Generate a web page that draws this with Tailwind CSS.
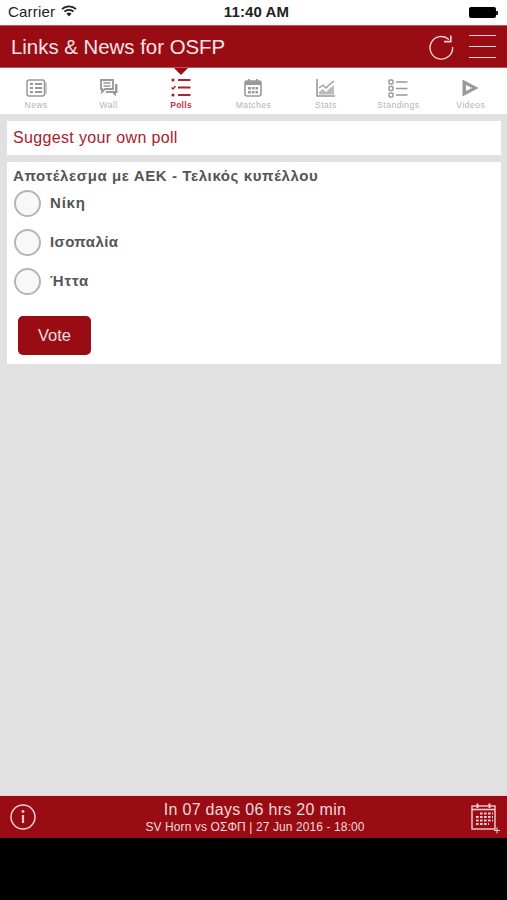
<!DOCTYPE html>
<html lang="en">
<head>
    <meta charset="UTF-8">
    <meta name="viewport" content="width=device-width, initial-scale=1.0">
    <title>Links & News for OSFP</title>
    <script src="https://cdn.jsdelivr.net/npm/@tailwindcss/browser@4"></script>
</head>
<body class="bg-black font-['Liberation_Sans',sans-serif]">
<div class="w-[507px] h-[900px] flex flex-col overflow-hidden">
    <!-- status bar -->
    <div class="h-[25px] shrink-0 bg-white grid grid-cols-3 items-center px-[8px] text-[#222]">
        <div class="flex items-center gap-[6px] text-[15px] tracking-[0.2px]">
            <span>Carrier</span>
            <svg width="16" height="12" viewBox="0 0 16 12" class="-mt-[3px]">
                <path d="M1 4.2 A10 10 0 0 1 15 4.2" fill="none" stroke="#222" stroke-width="1.7"/>
                <path d="M3.4 6.7 A6.6 6.6 0 0 1 12.6 6.7" fill="none" stroke="#222" stroke-width="1.7"/>
                <path d="M5.5 8.8 A3.6 3.6 0 0 1 10.5 8.8 L8 11.4 Z" fill="#222"/>
            </svg>
        </div>
        <div class="text-center text-[15px] font-bold whitespace-nowrap pl-[6px] tracking-[0.1px]">11:40 AM</div>
        <div class="flex justify-end items-center pr-[1px]">
            <div class="w-[27px] h-[11px] bg-black rounded-[2px]"></div>
            <div class="w-[2px] h-[4px] bg-[#222]"></div>
        </div>
    </div>

    <!-- title bar -->
    <div class="h-[43px] shrink-0 bg-[#990c14] border-y border-[#c4545a] flex items-center justify-between pl-[11px] pr-[11px] text-[#f6e4e5]">
        <div class="text-[20.4px] pt-[1px]">Links &amp; News for OSFP</div>
        <div class="flex items-center gap-[15px]">
            <svg width="26" height="26" viewBox="0 0 26 26" fill="none" stroke="#f5d5d6" stroke-width="1.4">
                <path d="M21 5.5 A11.3 11.3 0 1 0 24.6 13"/>
                <path d="M16 7.6 H22.8 V1.6" stroke-width="1.6"/>
            </svg>
            <div class="w-[27px] flex flex-col gap-[9.5px]">
                <div class="h-[1.5px] bg-[#f5d5d6]"></div>
                <div class="h-[1.5px] bg-[#f5d5d6]"></div>
                <div class="h-[1.5px] bg-[#f5d5d6]"></div>
            </div>
        </div>
    </div>

    <!-- tabs -->
    <div class="relative h-[46px] shrink-0 bg-white grid grid-cols-7 text-[8.5px] text-[#b3b3b3] tracking-[0.5px]">
        <div class="absolute left-[174px] top-0 w-0 h-0 border-x-[7px] border-x-transparent border-t-[7px] border-t-[#990c14]"></div>
        <div class="flex flex-col items-center pt-[11px]">
            <svg width="21" height="18" viewBox="0 0 21 18" fill="none" stroke="#999" stroke-width="1.5">
                <rect x="1" y="1" width="17.5" height="16" rx="2"/>
                <path d="M4 5 H7 M4 9 H7 M4 13 H7 M9 5 H16 M9 9 H16 M9 13 H16" stroke-width="2"/>
                <path d="M19 4 H20 V15" stroke-width="1"/>
            </svg>
            <span class="mt-[2px]">News</span>
        </div>
        <div class="flex flex-col items-center pt-[11px]">
            <svg width="18" height="18" viewBox="0 0 18 18" fill="none">
                <path d="M1 1 H13 V10 H5 L2 13 V10 H1 Z" stroke="#999" stroke-width="1.8"/>
                <path d="M3.5 4 H10.5 M3.5 7 H10.5" stroke="#999" stroke-width="1.3"/>
                <path d="M15 5 H17.5 V14 H16 V17.5 L12.5 14 H6 V12 H15 Z" fill="#999"/>
            </svg>
            <span class="mt-[2px]">Wall</span>
        </div>
        <div class="flex flex-col items-center pt-[10px] text-[#b53a42] font-bold tracking-[0.3px]">
            <svg width="20" height="19" viewBox="0 0 20 19" fill="none" stroke="#a8232b">
                <circle cx="2" cy="2" r="1.6" fill="#a8232b" stroke="none"/>
                <path d="M0.5 9.5 L2 11 L4.5 8" stroke-width="1.4"/>
                <circle cx="2" cy="17" r="1.6" fill="#a8232b" stroke="none"/>
                <path d="M7 2 H19.5 M7 9.5 H19.5 M7 17 H19.5" stroke-width="1.8"/>
            </svg>
            <span class="mt-[2px]">Polls</span>
        </div>
        <div class="flex flex-col items-center pt-[11px]">
            <svg width="18" height="18" viewBox="0 0 18 18">
                <rect x="1" y="2" width="16" height="15" rx="2" fill="none" stroke="#999" stroke-width="1.6"/>
                <rect x="1" y="2" width="16" height="4" fill="#999"/>
                <path d="M5 0 V3 M13 0 V3" stroke="#999" stroke-width="1.8"/>
                <path d="M4 8 H7 V10.5 H4 Z M8 8 H10.5 V10.5 H8 Z M11.5 8 H14 V10.5 H11.5 Z M4 12 H7 V14.5 H4 Z M8 12 H10.5 V14.5 H8 Z M11.5 12 H14 V14.5 H11.5 Z" fill="#999"/>
            </svg>
            <span class="mt-[2px]">Matches</span>
        </div>
        <div class="flex flex-col items-center pt-[11px]">
            <svg width="19" height="18" viewBox="0 0 19 18" fill="none" stroke="#999">
                <path d="M1 0 V17 H19" stroke-width="1.6"/>
                <path d="M3 9 L7 6 L10 9 L14 5 L18 2" stroke-width="1.3"/>
                <path d="M3 13 L7 10 L10 13 L14 9 L18 6 V15.5 H3 Z" fill="#bbb" stroke="none"/>
            </svg>
            <span class="mt-[2px]">Stats</span>
        </div>
        <div class="flex flex-col items-center pt-[11px]">
            <svg width="20" height="19" viewBox="0 0 20 19" fill="none" stroke="#999">
                <rect x="1" y="1" width="4" height="4" rx="1" stroke-width="1.5"/>
                <rect x="1" y="7.5" width="4" height="4" rx="1" stroke-width="1.5"/>
                <rect x="1" y="14" width="4" height="4" rx="1" stroke-width="1.5"/>
                <path d="M8 3 H19.5 M8 9.5 H19.5 M8 16 H19.5" stroke-width="1.4"/>
            </svg>
            <span class="mt-[1px]">Standings</span>
        </div>
        <div class="flex flex-col items-center pt-[11px]">
            <svg width="17" height="18" viewBox="0 0 17 18">
                <path fill-rule="evenodd" d="M0.5 0.5 L16.5 9 L0.5 17.5 Z M4 6 V12 L10 9 Z" fill="#999"/>
            </svg>
            <span class="mt-[2px]">Videos</span>
        </div>
    </div>

    <!-- content -->
    <div class="flex-1 bg-[#e1e1e1] pl-[7px] pr-[6px] pt-[7px] flex flex-col gap-[7px]">
        <div class="h-[34px] bg-white pl-[6px] flex items-center text-[16px] text-[#a8202c] tracking-[0.35px]">Suggest your own poll</div>
        <div class="h-[202px] bg-white pl-[6px] pt-[5px]">
            <div class="text-[15px] leading-[17px] font-bold text-[#555] tracking-[0.6px]">Αποτέλεσμα με ΑΕΚ - Τελικός κυπέλλου</div>
            <div class="flex flex-col gap-[12px] mt-[6px] pl-[1px]">
                <label class="flex items-center gap-[9px] text-[15px] font-bold text-[#555] tracking-[0.8px]">
                    <span class="w-[27px] h-[27px] rounded-full border-2 border-[#b5b5b5] bg-[#f8f8f8]"></span>Νίκη
                </label>
                <label class="flex items-center gap-[9px] text-[15px] font-bold text-[#555] tracking-[0.4px]">
                    <span class="w-[27px] h-[27px] rounded-full border-2 border-[#b5b5b5] bg-[#f8f8f8]"></span>Ισοπαλία
                </label>
                <label class="flex items-center gap-[9px] text-[15px] font-bold text-[#555] tracking-[0.8px]">
                    <span class="w-[27px] h-[27px] rounded-full border-2 border-[#b5b5b5] bg-[#f8f8f8]"></span>Ήττα
                </label>
            </div>
            <button class="mt-[21px] ml-[5px] w-[73px] h-[39px] bg-[#990c14] rounded-[5px] text-white/85 text-[16.5px]">Vote</button>
        </div>
    </div>

    <!-- countdown bar -->
    <div class="h-[43px] shrink-0 bg-[#990c14] border-t border-[#e8d0d0] flex items-center justify-between pl-[10px] pr-[8px] text-[#f3d9da]">
        <svg width="26" height="26" viewBox="0 0 26 26" fill="none" stroke="#f0cfd0">
            <circle cx="13" cy="13" r="12" stroke-width="1.5"/>
            <circle cx="13" cy="7.5" r="1.4" fill="#f0cfd0" stroke="none"/>
            <path d="M13 11 V19" stroke-width="2.2"/>
        </svg>
        <div class="text-center pl-[3px]">
            <div class="text-[16px] leading-[19px] tracking-[0.3px]">In 07 days 06 hrs 20 min</div>
            <div class="text-[12px] leading-[15px] mt-[1px] tracking-[0.1px]">SV Horn vs ΟΣΦΠ | 27 Jun 2016 - 18:00</div>
        </div>
        <svg width="28" height="29" viewBox="0 0 28 29" fill="none" stroke="#f0cfd0" class="overflow-visible">
            <rect x="1" y="3" width="23" height="23" stroke-width="1.4"/>
            <path d="M1 6.5 H24" stroke-width="1.6"/>
            <path d="M6.5 0.5 V5 M18.5 0.5 V5" stroke-width="2"/>
            <path d="M9 10.5 H22 M5 14 H22 M5 17.5 H22 M5 21 H18" stroke-width="2.2" stroke-dasharray="2.6 1.4"/>
            <path d="M23 27.5 H29 M26 24.5 V30.5" stroke-width="1.1"/>
        </svg>
    </div>

    <div class="h-[62px] shrink-0 bg-black"></div>
</div>
</body>
</html>
